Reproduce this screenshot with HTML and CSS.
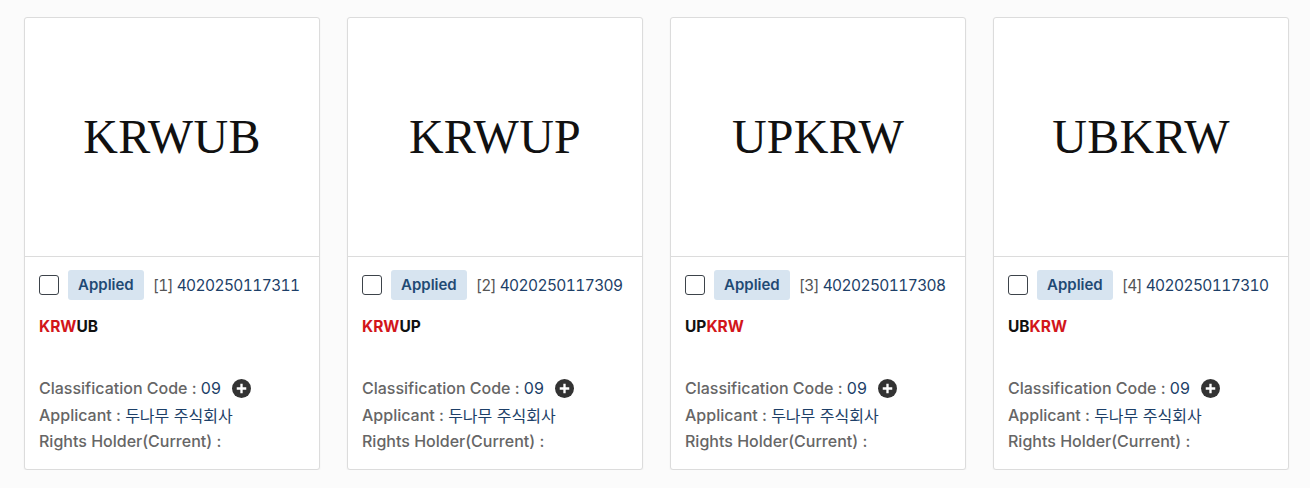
FILE: index.html
```html
<!DOCTYPE html>
<html lang="en">
<head>
<meta charset="utf-8">
<link rel="stylesheet" href="styles.css">
</head>
<body>
<div class="grid">
  <div class="card">
    <div class="thumb"><span class="mark">KRWUB</span></div>
    <div class="info">
      <div class="row">
        <span class="check"></span>
        <span class="badge">Applied</span>
        <span class="num"><span class="idx">[1]</span> 4020250117311</span>
      </div>
      <div class="name"><span class="hl">KRW</span>UB</div>
      <div class="meta">
        <div class="line">Classification Code : <span class="val">09</span> <span class="plus"><svg viewBox="0 0 18 18" width="19" height="19"><circle cx="9" cy="9" r="9" fill="#333"/><path d="M9 4.5v9M4.5 9h9" stroke="#fff" stroke-width="2.2"/></svg></span></div>
        <div class="line">Applicant : <span class="val">두나무 주식회사</span></div>
        <div class="line">Rights Holder(Current) :</div>
      </div>
    </div>
  </div>
  <div class="card">
    <div class="thumb"><span class="mark">KRWUP</span></div>
    <div class="info">
      <div class="row">
        <span class="check"></span>
        <span class="badge">Applied</span>
        <span class="num"><span class="idx">[2]</span> 4020250117309</span>
      </div>
      <div class="name"><span class="hl">KRW</span>UP</div>
      <div class="meta">
        <div class="line">Classification Code : <span class="val">09</span> <span class="plus"><svg viewBox="0 0 18 18" width="19" height="19"><circle cx="9" cy="9" r="9" fill="#333"/><path d="M9 4.5v9M4.5 9h9" stroke="#fff" stroke-width="2.2"/></svg></span></div>
        <div class="line">Applicant : <span class="val">두나무 주식회사</span></div>
        <div class="line">Rights Holder(Current) :</div>
      </div>
    </div>
  </div>
  <div class="card">
    <div class="thumb"><span class="mark">UPKRW</span></div>
    <div class="info">
      <div class="row">
        <span class="check"></span>
        <span class="badge">Applied</span>
        <span class="num"><span class="idx">[3]</span> 4020250117308</span>
      </div>
      <div class="name">UP<span class="hl">KRW</span></div>
      <div class="meta">
        <div class="line">Classification Code : <span class="val">09</span> <span class="plus"><svg viewBox="0 0 18 18" width="19" height="19"><circle cx="9" cy="9" r="9" fill="#333"/><path d="M9 4.5v9M4.5 9h9" stroke="#fff" stroke-width="2.2"/></svg></span></div>
        <div class="line">Applicant : <span class="val">두나무 주식회사</span></div>
        <div class="line">Rights Holder(Current) :</div>
      </div>
    </div>
  </div>
  <div class="card">
    <div class="thumb"><span class="mark">UBKRW</span></div>
    <div class="info">
      <div class="row">
        <span class="check"></span>
        <span class="badge">Applied</span>
        <span class="num"><span class="idx">[4]</span> 4020250117310</span>
      </div>
      <div class="name">UB<span class="hl">KRW</span></div>
      <div class="meta">
        <div class="line">Classification Code : <span class="val">09</span> <span class="plus"><svg viewBox="0 0 18 18" width="19" height="19"><circle cx="9" cy="9" r="9" fill="#333"/><path d="M9 4.5v9M4.5 9h9" stroke="#fff" stroke-width="2.2"/></svg></span></div>
        <div class="line">Applicant : <span class="val">두나무 주식회사</span></div>
        <div class="line">Rights Holder(Current) :</div>
      </div>
    </div>
  </div>
</div>
</body>
</html>
```
FILE: styles.css
```css
html, body {
  margin: 0;
  padding: 0;
  background: #fbfbfb;
  font-family: Inter, "Noto Sans CJK KR", sans-serif;
}
.grid {
  display: flex;
  gap: 27px;
  padding: 17px 0 0 24px;
}
.card {
  width: 294px;
  height: 451px;
  background: #fff;
  border: 1px solid #dcdcdc;
  border-radius: 3px;
  box-shadow: 0 1px 2px rgba(0,0,0,0.06);
  display: flex;
  flex-direction: column;
}
.thumb {
  height: 238px;
  border-bottom: 1px solid #dcdcdc;
  display: flex;
  align-items: center;
  justify-content: center;
}
.mark {
  font-family: "Liberation Serif", serif;
  font-size: 48px;
  color: #111;
  letter-spacing: 0.3px;
  padding-bottom: 2px;
}
.info {
  padding: 13px 10px 0 13px;
}
.row {
  display: flex;
  align-items: center;
  height: 30px;
  white-space: nowrap;
}
.check {
  flex: none;
  width: 18px;
  height: 18px;
  border: 1.7px solid #3d434a;
  border-radius: 3px;
  margin-right: 9px;
  margin-left: 1px;
}
.badge {
  flex: none;
  background: #d7e4f0;
  color: #1f4a74;
  font-weight: 600;
  font-size: 15px;
  height: 30px;
  line-height: 30px;
  padding: 0 10px;
  border-radius: 3px;
  margin-right: 9px;
}
.num {
  white-space: nowrap;
  font-size: 15.5px;
  color: #1d3f68;
  font-variant-numeric: tabular-nums;
  letter-spacing: -0.6px;
}
.idx {
  color: #555;
}
.name {
  margin-top: 17px;
  line-height: 20px;
  height: 20px;
  font-size: 15.5px;
  font-weight: 700;
  color: #111;
  margin-left: 1px;
}
.hl {
  color: #d2161b;
}
.meta {
  margin-top: 38px;
  margin-left: 1px;
}
.line {
  font-size: 16px;
  font-weight: 500;
  color: #666;
  height: 26.5px;
  display: flex;
  align-items: center;
  white-space: pre;
}
.val {
  color: #1d3f68;
  font-weight: 400;
}
.plus {
  display: inline-flex;
  margin-left: 11px;
}
```
